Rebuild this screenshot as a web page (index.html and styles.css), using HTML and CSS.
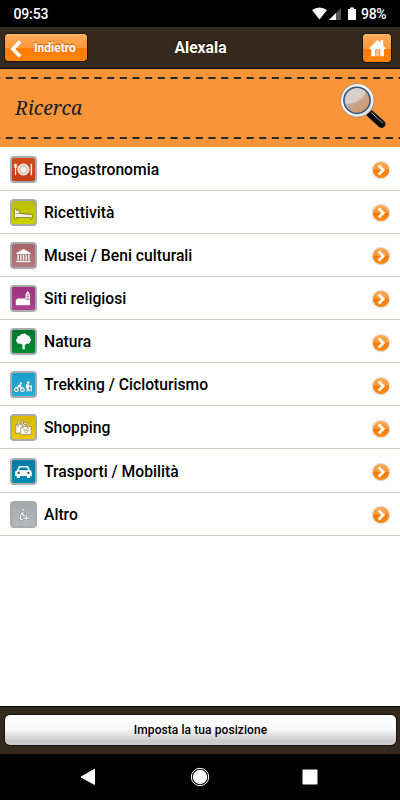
FILE: index.html
```html
<!DOCTYPE html>
<html lang="it">
<head>
<meta charset="utf-8">
<title>Alexala</title>
<link rel="stylesheet" href="styles.css">
</head>
<body>
<svg width="0" height="0" class="defs">
  <defs>
    <linearGradient id="orb" x1="0" y1="0" x2="0" y2="1"><stop offset="0" stop-color="#ffad55"/><stop offset=".48" stop-color="#ff9533"/><stop offset=".52" stop-color="#fb7900"/><stop offset="1" stop-color="#ff8b12"/></linearGradient>
    <linearGradient id="lens" x1="0" y1="0" x2=".8" y2="1"><stop offset="0" stop-color="#b9b3b2"/><stop offset=".5" stop-color="#c3aa9b"/><stop offset="1" stop-color="#d69360"/></linearGradient>
    <linearGradient id="rim" x1="0" y1="0" x2="1" y2="1"><stop offset="0" stop-color="#d8d8d8"/><stop offset=".4" stop-color="#ffffff"/><stop offset="1" stop-color="#d5d9de"/></linearGradient>
    <symbol id="next" viewBox="0 0 20 20"><circle cx="10" cy="10" r="9.3" fill="#e3dfdc"/><circle cx="10" cy="10" r="8.1" fill="url(#orb)"/><path d="M7.7 5.5 12.2 10l-4.5 4.5" fill="none" stroke="#fff" stroke-width="2.8"/></symbol>
  </defs>
</svg>
<div class="screen">
  <div class="status">
    <span class="clock">09:53</span>
    <svg class="signals" width="46" height="16" viewBox="0 0 46 16"><path d="M0 4Q7.5-1 15 4L7.5 13.5Z" fill="#fff"/><path d="M29 2v12H17Z" fill="#555"/><path d="M24 7v7h-7Z" fill="#fff"/><path d="M38 1.5h4V3h2v11h-8V3h2Z" fill="#fff"/></svg>
    <span class="charge">98%</span>
  </div>
  <header class="topbar">
    <a class="back"><svg width="12" height="18" viewBox="0 0 12 18"><path d="M10.2 1.4 2.8 9l7.4 7.6" fill="none" stroke="#fff" stroke-width="3.6"/></svg><span>Indietro</span></a>
    <h1>Alexala</h1>
    <a class="home"><svg width="17" height="18" viewBox="0 0 17 18"><path d="M8.5.8 0 9.5l1.2 1.1 1.1-1v7.6h4.4v-6h4v6h4.2V9.6l1 1L17 9.5l-2.8-2.9V1.2h-2.6v2.7Z" fill="#fff"/><path d="M6.7 17.2v-6.5h4v6.5" fill="#ffc38b" stroke="#f4862b" stroke-width=".8"/></svg></a>
  </header>
  <section class="search">
    <svg class="stitch" width="400" height="2"><path d="M-6.9 1H400" stroke="#202a2c" stroke-width="2" stroke-dasharray="7.1 5.57"/></svg>
    <div class="field">
      <span>Ricerca</span>
      <svg class="glass" width="48" height="48" viewBox="0 0 48 48"><path d="M28 28l5 5" stroke="#777" stroke-width="4"/><path d="M31.5 32 42.5 42" stroke="#5b5048" stroke-width="8.4" stroke-linecap="round"/><path d="M31.5 32 42.5 42" stroke="#080808" stroke-width="7" stroke-linecap="round"/><path d="M32 30.3 44 41.3" stroke="#aaa" stroke-width="1"/><circle cx="18.3" cy="18.5" r="17.1" fill="#a08a79"/><circle cx="18.3" cy="18.4" r="16.3" fill="url(#rim)"/><circle cx="18" cy="18.3" r="13.1" fill="url(#lens)" stroke="#315582" stroke-width="1.5"/><path d="M6.2 19A12 12 0 0 1 26.5 9.5Q25 20 6.5 22.5Z" fill="#fff" opacity=".42"/></svg>
    </div>
    <svg class="stitch" width="400" height="2"><path d="M-6.9 1H400" stroke="#202a2c" stroke-width="2" stroke-dasharray="7.1 5.57"/></svg>
  </section>
  <main class="list">
    <a class="row"><svg class="cat red" viewBox="0 0 24 24"><g fill="none" stroke="#f8eee9"><circle cx="11.9" cy="12" r="5.8" fill="#f8eee9"/><circle cx="11.9" cy="12" r="4.1" stroke="#a99288" stroke-width=".8"/><path d="M3.7 6v12" stroke-width="1.2"/><path d="M2.4 6v3.7H5V6" stroke-width=".9"/><path d="M20.2 6v12" stroke-width="1.5"/></g></svg><span>Enogastronomia</span><svg class="next"><use href="#next"/></svg></a>
    <a class="row"><svg class="cat lime" viewBox="0 0 24 24"><path d="M2.5 7.6h1.9v2.1h3.7v3.1l11.3 1.1h1.7v4.9h-1.5v-1.6H4.4v1.6H2.5Z" fill="#f4f4e6" stroke="#77781b" stroke-width=".8"/><path d="M4.6 12.9h4l10.6 1.3" fill="none" stroke="#85872b" stroke-width=".8"/></svg><span>Ricettività</span><svg class="next"><use href="#next"/></svg></a>
    <a class="row"><svg class="cat rose" viewBox="0 0 24 24"><path d="M12 5 4.3 9.4v1.4h15.4V9.4ZM5.4 11h1.8v6H5.4Zm2.9 0h1.8v6H8.3Zm2.8 0h1.8v6h-1.8Zm2.8 0h1.8v6h-1.8Zm2.9 0h1.8v6h-1.8ZM4.3 17.2h15.4V19H4.3Z" fill="#fff" stroke="#784d50" stroke-width=".25"/></svg><span>Musei / Beni culturali</span><svg class="next"><use href="#next"/></svg></a>
    <a class="row"><svg class="cat purple" viewBox="0 0 24 24"><path d="M4 19v-5.4l1.9-1.7h8.2V7.7L16.4 4l2.4 3.7V19Z" fill="#fff"/><path d="M15.3 8.2h2.3M15.3 10.2h2.3M14.4 12.6h4" stroke="#7d3978" stroke-width="1"/></svg><span>Siti religiosi</span><svg class="next"><use href="#next"/></svg></a>
    <a class="row"><svg class="cat green" viewBox="0 0 24 24"><path d="M10.9 20v-4.6L8.7 14Q5.6 15 5.1 12.4 2.9 10.5 5.4 9 5 6.1 8.1 6.1 9.8 3.4 12 4 14.4 3.1 15.5 5.5 18.8 5.3 18.6 8.3 21.1 10 18.9 12 18.7 15 15.4 14.1l-2.1 1.5V20Z" fill="#fff"/></svg><span>Natura</span><svg class="next"><use href="#next"/></svg></a>
    <a class="row"><svg class="cat cyan" viewBox="0 0 24 24"><g fill="none" stroke="#527d8d" stroke-width="2.3"><circle cx="4.6" cy="17.4" r="1.9"/><circle cx="10.9" cy="17.4" r="1.9"/><path d="m5.2 15.8 2.4-2.7 2.6 2.8"/><path d="M16.7 12.5v3.5l-1.4 3.2m1.4-3.2 1.6 3.2M14.8 13l4.8 1M20 12.8v6.4"/></g><circle cx="9.2" cy="10.9" r="1.6" fill="#527d8d"/><circle cx="16.9" cy="10" r="1.8" fill="#527d8d"/><g fill="none" stroke="#fff" stroke-width="1.3"><circle cx="4.6" cy="17.4" r="1.9"/><circle cx="10.9" cy="17.4" r="1.9"/><path d="m5.2 15.8 2.4-2.7 2.6 2.8"/><path d="M16.7 12.5v3.5l-1.4 3.2m1.4-3.2 1.6 3.2M14.8 13l4.8 1M20 12.8v6.4"/></g><path d="M14.6 11.8h3.2v4h-3.2ZM5.8 13l3-1.5 1 2.8-3.6.8Z" fill="#fff"/><circle cx="9.2" cy="10.9" r="1.2" fill="#fff"/><circle cx="16.9" cy="10" r="1.4" fill="#fff"/></svg><span>Trekking / Cicloturismo</span><svg class="next"><use href="#next"/></svg></a>
    <a class="row"><svg class="cat gold" viewBox="0 0 24 24"><g stroke="#867b4d" stroke-width=".7"><path d="m4.3 8.8 10-.3v9.3H3.7Z" fill="#fffdf0"/><path d="M6.4 11V7.3Q6.8 4.9 8.9 5q2.2.1 2.4 2.4v2.2" fill="none" stroke-width="1.9"/><path d="M6.4 11V7.3Q6.8 4.9 8.9 5q2.2.1 2.4 2.4v2.2" fill="none" stroke="#fff8d5" stroke-width="1"/><path d="m9.4 11.1 10.3-.2.5 8.5H8.9Z" fill="#fffdf0"/><path d="M11.6 13V9.8Q12 7.5 14.2 7.5q2.4.1 2.6 2.3V13" fill="none" stroke-width="1.9"/><path d="M11.6 13V9.8Q12 7.5 14.2 7.5q2.4.1 2.6 2.3V13" fill="none" stroke="#fff8d5" stroke-width="1"/><path d="m14.6 17.9-2.3-2.2q0-2.1 2.3-.8 2.5-1.3 2.5.8Z" fill="none"/></g></svg><span>Shopping</span><svg class="next"><use href="#next"/></svg></a>
    <a class="row"><svg class="cat teal" viewBox="0 0 24 24"><path fill-rule="evenodd" d="M7.2 6.2h9.6l1.9 4.6q2 .5 2 2.2v3.6h-1.8v2.2h-3.2v-2.2H8.3v2.2H5.1v-2.2H3.3V13q0-1.7 2-2.2ZM8.2 7.8l-1.1 3h9.8l-1.1-3Z" fill="#fff"/><circle cx="6.9" cy="13.5" r="1.2" fill="#37434a"/><circle cx="17.1" cy="13.5" r="1.2" fill="#37434a"/></svg><span>Trasporti / Mobilità</span><svg class="next"><use href="#next"/></svg></a>
    <a class="row"><svg class="cat gray" viewBox="0 0 24 24"><g fill="none" stroke="#777" stroke-width="2.4"><path d="M11.4 9v4.2h2.2M10.4 10.4l-2 4q-.2 3 2.8 3.3M14.8 12.7v6.2M11.6 15.8H18"/></g><g fill="none" stroke="#fff" stroke-width="1.3"><path d="M11.4 9v4.2h2.2M10.4 10.4l-2 4q-.2 3 2.8 3.3M14.8 12.7v6.2M11.6 15.8H18"/></g><circle cx="11.5" cy="7.1" r="1.4" fill="#fff" stroke="#777" stroke-width=".5"/></svg><span>Altro</span><svg class="next"><use href="#next"/></svg></a>
  </main>
  <footer class="bottombar"><a class="position">Imposta la tua posizione</a></footer>
  <nav class="keys">
    <svg width="16" height="18" viewBox="0 0 16 18"><path d="M14.5 1.3v15.2L1 9Z" fill="#fff" stroke="#fff" stroke-linejoin="round"/></svg>
    <svg width="20" height="20" viewBox="0 0 20 20"><circle cx="10" cy="10" r="8.7" fill="none" stroke="#fff" stroke-width="1"/><circle cx="10" cy="10" r="7.2" fill="#fff"/></svg>
    <svg width="16" height="16" viewBox="0 0 16 16"><rect x=".5" y=".5" width="15" height="15" rx="1" fill="#fff"/></svg>
  </nav>
</div>
</body>
</html>
```
FILE: styles.css
```css
* { box-sizing: border-box; }
body { margin: 0; background: #fff; font-family: Roboto, "Liberation Sans", sans-serif; color: #000; }
svg { display: block; flex: none; }
.defs { position: absolute; }
.screen { width: 400px; height: 800px; display: flex; flex-direction: column; overflow: hidden; }
.status { height: 27px; flex: none; background: #000; color: #fff; display: flex; align-items: center; padding: 1px 14px 0 13.5px; font-size: 14px; font-weight: 500; }
.clock { flex: 1; letter-spacing: -.15px; }
.signals { margin-right: 3px; }
.charge { width: 25px; letter-spacing: -.3px; }
.topbar { height: 42px; flex: none; background: #33291d; border-bottom: 1px solid #050817; display: grid; grid-template-columns: 82px 1fr 82px; align-items: center; padding: 0 9px 0 5px; color: #fff; }
.topbar h1 { margin: 0 0 0 5px; text-align: center; font-size: 15.7px; line-height: 20px; font-weight: 700; text-shadow: 0 -1px 1px #000; }
.back, .home { background: linear-gradient(#ffad59, #ff9839 52%, #ff7a00 54%, #ff8508); box-shadow: 0 0 0 1px #19140f, inset 0 1px #ffbd78; border-radius: 4px; display: flex; align-items: center; }
.back { width: 82px; height: 27px; padding-left: 5px; gap: 12px; font-size: 12px; font-weight: 700; text-shadow: 0 -1px 1px #b85b0a; }
.back svg { margin-top: 3px; }
.home { width: 28px; height: 28px; justify-content: center; justify-self: end; }
.search { height: 78px; flex: none; background: #fa9439; padding: 8px 0; display: flex; flex-direction: column; justify-content: space-between; }
.field { height: 56px; display: flex; align-items: center; justify-content: space-between; padding: 0 13px 0 15px; font: italic 19.4px/28px "Noto Serif", "Liberation Serif", serif; color: #14202c; }
.glass { margin-bottom: 5px; }
.list { flex: 1; padding-top: .5px; display: grid; grid-template-rows: repeat(9, 43.15px); align-content: start; }
.row { border-bottom: 1px solid #d0d0c9; display: flex; align-items: center; padding: 1px 9px 0 10px; font-size: 15.7px; font-weight: 500; }
.row span { flex: 1; margin-left: 7px; }
.cat { width: 27px; height: 27px; border: 2px solid #a9abad; border-radius: 4px; }
.next { width: 20px; height: 20px; margin-top: 2px; }
.red { background: linear-gradient(#d14a20, #c53d13); }
.lime { background: linear-gradient(#b9bc00, #d0d300); }
.rose { background: linear-gradient(#a96469, #b5777b); }
.purple { background: linear-gradient(#9b317e, #ae4291); }
.green { background: linear-gradient(#00772b, #008a32); }
.cyan { background: linear-gradient(#199fc9, #22addb); }
.gold { background: linear-gradient(#d9b900, #eccb00); }
.teal { background: linear-gradient(#007ba5, #0089b3); }
.gray { background: linear-gradient(#a7a8aa, #b7b8ba); }
.bottombar { height: 48px; flex: none; background: #33291d; border-top: 1px solid #050505; padding: 8px 4px 8px 5px; }
.position { height: 30px; display: flex; align-items: center; justify-content: center; border-radius: 5px; background: linear-gradient(#fff, #fafafa 45%, #c9c9c9 88%, #d0d0d0); box-shadow: 0 0 0 1px #19120b; font-size: 12px; font-weight: 500; letter-spacing: .08px; }
.keys { height: 46px; flex: none; background: #000; display: flex; align-items: center; justify-content: space-between; padding: 0 82px 1px 80px; }
.keys svg:nth-child(2) { margin-left: 2px; }
```
